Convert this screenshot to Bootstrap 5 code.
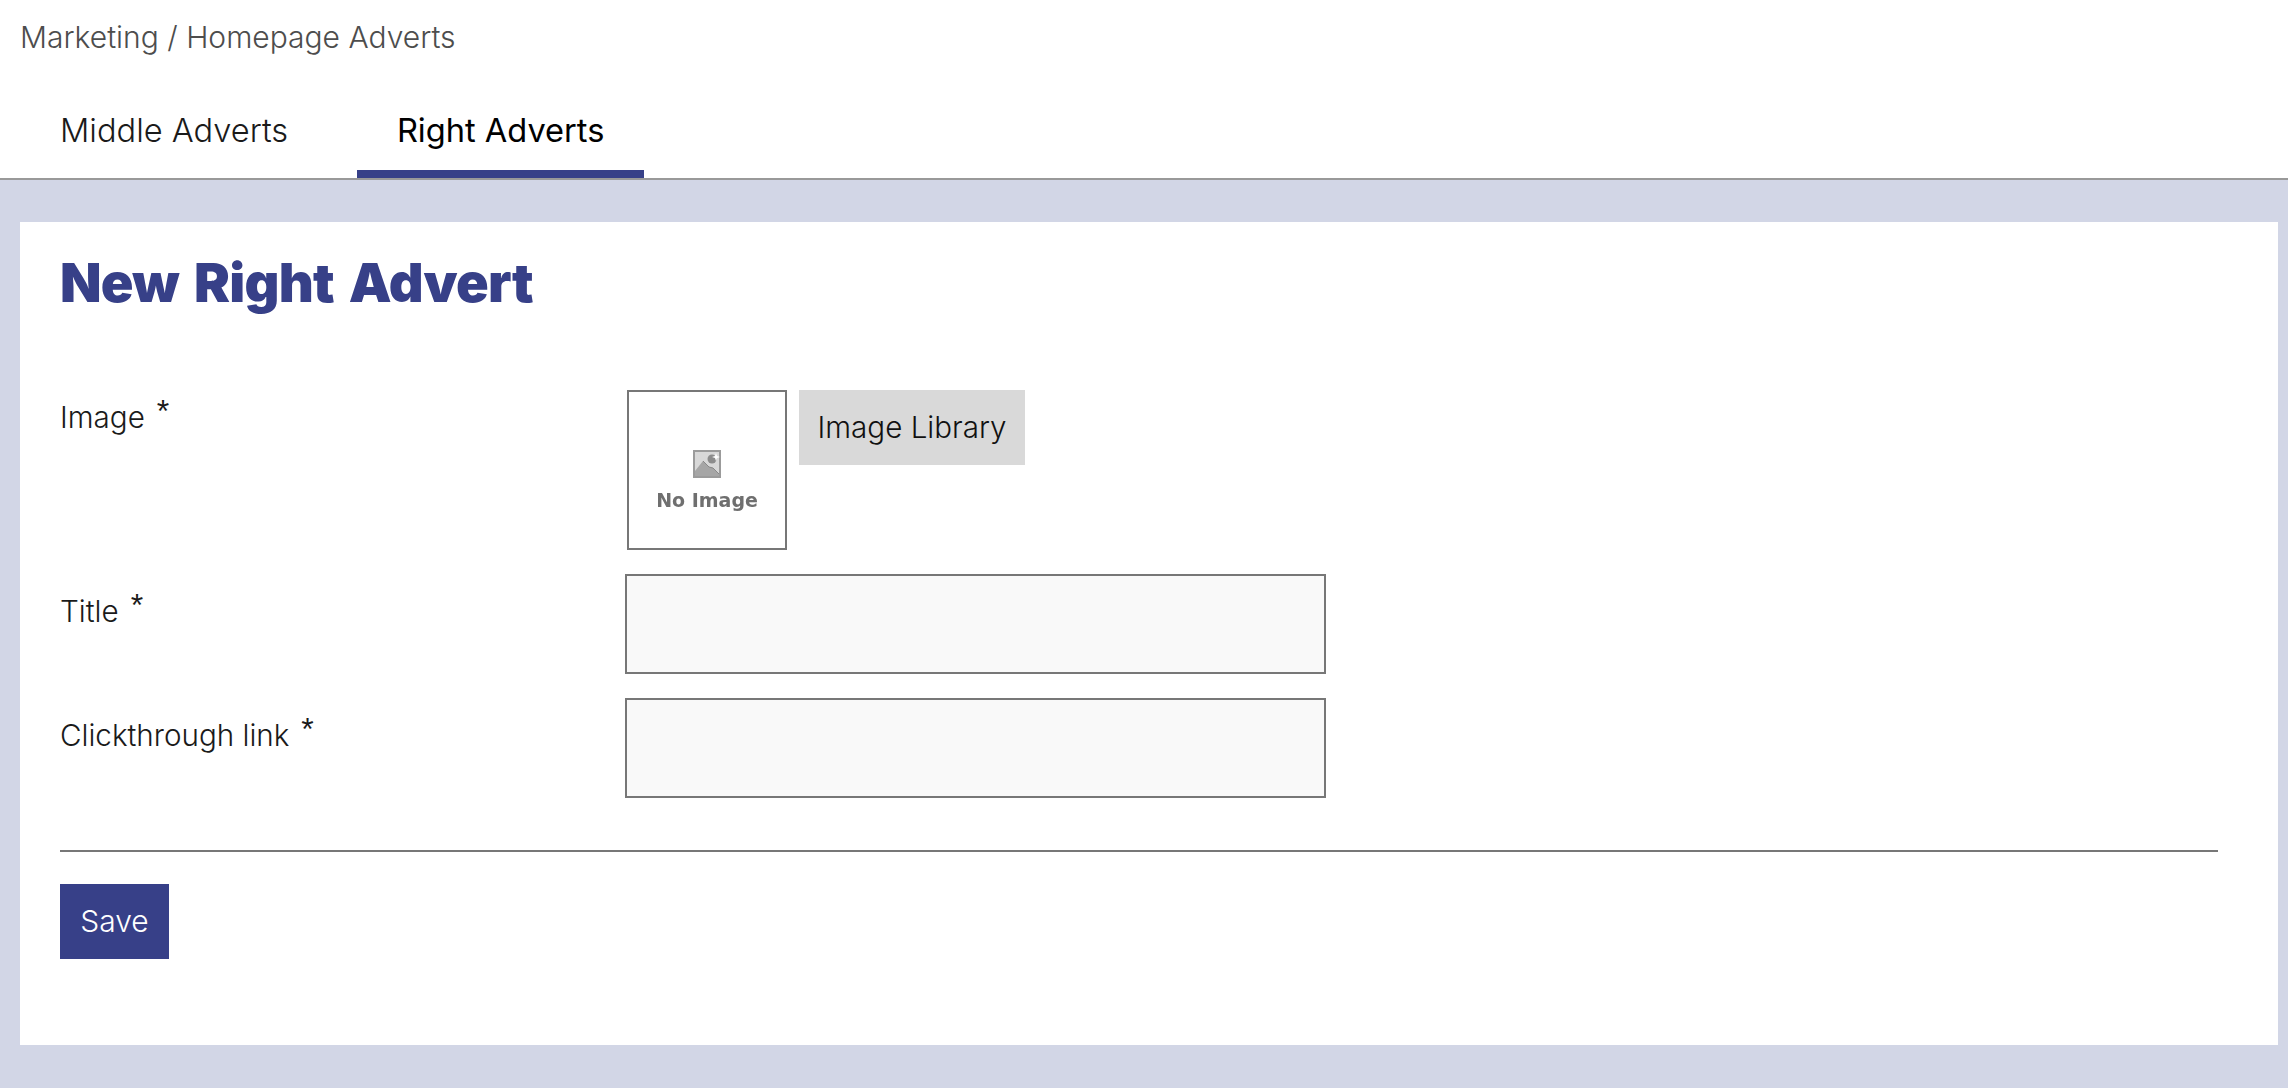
<!DOCTYPE html>
<html lang="en">
<head>
<meta charset="utf-8">
<title>New Right Advert</title>
<link href="https://cdn.jsdelivr.net/npm/bootstrap@5.3.0/dist/css/bootstrap.min.css" rel="stylesheet">
<style>
html,body{height:100%}
body{background:#d2d6e6;font-family:"Inter","Liberation Sans",sans-serif;font-weight:300;color:#1a1a1a;font-size:29.6px;line-height:1.2}
.topbar{background:#fff;height:180px;border-bottom:2px solid #999;padding:0 0 0 20px;display:flex;flex-direction:column}
.crumb{color:#4d4d4d;font-size:30px;line-height:34px;padding-top:20px;height:74px}
.tabrow{margin-left:-20px;height:104px}
.tabitem{color:#1a1a1a;text-decoration:none;height:104px;line-height:40px;font-size:32.6px}
.tabitem.on{border-bottom:8px solid #374088;color:#000;font-weight:400;margin-left:28px;padding:36px 0 0;width:287px;text-align:center}
.tabitem.first{margin-left:0;padding:36px 41px 0 60px}
.sheet{background:#fff;margin:42px 10px 0 20px;height:823px;padding:28px 60px 0 40px}
.headline{font-family:"Inter",sans-serif;font-weight:900;color:#374088;font-size:54px;line-height:66px;margin:0 0 74px;letter-spacing:-.75px;word-spacing:5px}
.frow{display:flex;align-items:flex-start}
.gaprow{margin-top:24px}
.flabel{width:565px;flex:none;line-height:40px;padding-top:7px}
.lowlabel{padding-top:17px}
.star{font-family:"Liberation Sans",sans-serif;font-weight:400;font-size:32px;position:relative;top:-6px;margin-left:12px;line-height:1}
.thumbbox{width:160px;height:160px;border:2px solid #777;background:#fff;margin:0 12px 0 2px;display:flex;flex-direction:column;align-items:center;padding-top:58px}
.thumbtxt{font-family:"DejaVu Sans",sans-serif;font-weight:700;font-size:19px;line-height:22px;color:#6f6f6f;margin-top:11px;filter:blur(.6px);white-space:nowrap}
.thumbico{filter:blur(.5px)}
.libbtn{background:#d9d9d9;color:#111;border:0;border-radius:0;height:75px;width:226px;font-size:29.6px;font-weight:300;padding:0}
.libbtn:hover{background:#d9d9d9}
.txtbox{width:701px;height:100px;border:2px solid #777;background:#f9f9f9;border-radius:0}
.savebtn{background:#374088;color:#fff;border:0;border-radius:0;height:75px;width:109px;font-size:30px;font-weight:300;padding:0}
.savebtn:hover{background:#374088;color:#fff}
.divider{border:0;border-top:2px solid #777;opacity:1;margin:52px 0 32px}
</style>
</head>
<body>
<header class="topbar">
  <div class="crumb">Marketing / Homepage Adverts</div>
  <nav class="d-flex tabrow">
    <a class="tabitem first" href="#">Middle Adverts</a>
    <a class="tabitem on" href="#">Right Adverts</a>
  </nav>
</header>
<main class="sheet">
  <h1 class="headline">New Right Advert</h1>
  <form>
    <div class="frow">
      <label class="flabel">Image<span class="star">*</span></label>
      <div class="d-flex align-items-start">
        <div class="thumbbox">
          <svg class="thumbico" width="28" height="28" viewBox="0 0 28 28"><rect width="28" height="28" fill="#9b9b9b"/><rect x="2" y="2" width="24" height="24" fill="#d8d8d8"/><circle cx="19" cy="9" r="4.5" fill="#8c8c8c"/><path d="M2 21 L10 11 L16 17 L20 18 L26 24 L26 26 L2 26Z" fill="#a6a6a6"/><path d="M10 11 L16 17 L20 18 L26 24" fill="none" stroke="#888" stroke-width="1"/><path d="M23 3l1 3 3 1-3 1-1 3-1-3-3-1 3-1z" fill="#fff"/></svg>
          <div class="thumbtxt">No Image</div>
        </div>
        <button type="button" class="btn libbtn">Image Library</button>
      </div>
    </div>
    <div class="frow gaprow">
      <label class="flabel lowlabel">Title<span class="star">*</span></label>
      <input class="form-control txtbox" type="text">
    </div>
    <div class="frow gaprow">
      <label class="flabel lowlabel">Clickthrough link<span class="star">*</span></label>
      <input class="form-control txtbox" type="text">
    </div>
    <hr class="divider">
    <button type="button" class="btn savebtn">Save</button>
  </form>
</main>
<script src="https://cdn.jsdelivr.net/npm/bootstrap@5.3.0/dist/js/bootstrap.bundle.min.js"></script>
</body>
</html>
